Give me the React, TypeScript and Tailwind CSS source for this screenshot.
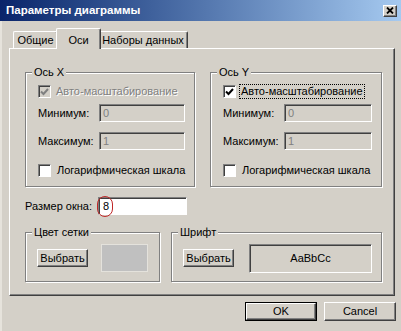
import React from "react";

const raised =
  "border border-t-white border-l-white border-r-[#404040] border-b-[#404040] shadow-[inset_-1px_-1px_0_#808080]";
const sunken =
  "border border-t-[#808080] border-l-[#808080] border-r-white border-b-white shadow-[inset_1px_1px_0_#404040]";

const Check = ({ checked, disabled }: { checked?: boolean; disabled?: boolean }) => (
  <div
    className={`w-[13px] h-[13px] shrink-0 flex items-center justify-center ${sunken} ${
      disabled ? "bg-[#d4d0c8]" : "bg-white"
    }`}
  >
    {checked && (
      <svg width="9" height="8" viewBox="0 0 9 8">
        <path
          d="M1 3.5 L3.5 6 L8 1"
          fill="none"
          stroke={disabled ? "#808080" : "#000"}
          strokeWidth="2"
        />
      </svg>
    )}
  </div>
);

const Field = ({ label, value, width }: { label: string; value: string; width: string }) => (
  <div className="flex items-center h-[18px]">
    <span className="w-[61px]">{label}</span>
    <div className={`${width} h-[18px] bg-[#d4d0c8] ${sunken} pl-[3px] flex items-center text-[#808080]`}>
      {value}
    </div>
  </div>
);

const Group = ({
  title,
  className,
  children,
}: {
  title: string;
  className: string;
  children: React.ReactNode;
}) => (
  <div className={`relative border border-[#808080] shadow-[inset_1px_1px_0_#fff,1px_1px_0_#fff] ${className}`}>
    <span className="absolute -top-[8px] left-[6px] bg-[#d4d0c8] px-[2px] leading-[14px]">{title}</span>
    {children}
  </div>
);

const AxisGroup = ({ title, width, inputW, active }: { title: string; width: string; inputW: string; active?: boolean }) => (
  <Group title={title} className={`${width} h-[115px] pt-[12px] pl-[12px]`}>
    <div className="flex items-center h-[13px] gap-[3px]">
      <Check checked disabled={!active} />
      {active ? (
        <span className="border border-dotted border-black px-[1px] leading-[13px]">Авто-масштабирование</span>
      ) : (
        <span className="pl-[2px] text-[#808080] [text-shadow:1px_1px_0_#fff]">Авто-масштабирование</span>
      )}
    </div>
    <div className="mt-[6px]">
      <Field label="Минимум:" value="0" width={inputW} />
    </div>
    <div className="mt-[10px]">
      <Field label="Максимум:" value="1" width={inputW} />
    </div>
    <div className="mt-[14px] flex items-center h-[13px] gap-[6px]">
      <Check />
      <span>Логарифмическая шкала</span>
    </div>
  </Group>
);

const Btn = ({ children, className = "" }: { children: React.ReactNode; className?: string }) => (
  <div className={`bg-[#d4d0c8] ${raised} flex items-center justify-center ${className}`}>{children}</div>
);

export default function App() {
  return (
    <div className="w-[401px] h-[331px] bg-[#d4d0c8] flex flex-col overflow-hidden text-[11px] text-black font-['Liberation_Sans',Arial,sans-serif]">
      <div className="h-[21px] shrink-0 flex items-center pl-[6px] pr-[4px] bg-linear-to-r from-[#0a246a] to-[#a6caf0]">
        <span className="flex-1 text-white font-bold text-[11.5px]">Параметры диаграммы</span>
        <div className={`w-[14px] h-[12px] bg-[#d4d0c8] ${raised} flex items-center justify-center`}>
          <svg width="8" height="7" viewBox="0 0 8 7">
            <path d="M1 0.5 L7 6.5 M7 0.5 L1 6.5" stroke="#000" strokeWidth="1.8" />
          </svg>
        </div>
      </div>

      <div className="flex-1 flex flex-col border-l-[2px] border-l-[#e6e3dc]">
        <div className="pl-[7px] pt-[7px]">
          <div className="h-[20px] flex items-end pl-[4px]">
            <div className="w-[45px] h-[17px] border-t border-l border-r border-t-white border-l-white border-r-[#404040] shadow-[inset_-1px_0_0_#808080] rounded-t-[2px] flex items-center justify-center">
              Общие
            </div>
            <div className="relative z-10 -mx-[2px] -mb-[1px] w-[45px] h-[21px] bg-[#d4d0c8] border-t border-l border-r border-t-white border-l-white border-r-[#404040] shadow-[inset_-1px_0_0_#808080] rounded-t-[2px] flex items-start pt-[3px] justify-center">
              Оси
            </div>
            <div className="w-[89px] h-[17px] border-t border-r border-t-white border-r-[#404040] shadow-[inset_-1px_0_0_#808080] rounded-t-[2px] flex items-center justify-center">
              Наборы данных
            </div>
          </div>

          <div className={`w-[386px] h-[248px] ${raised} pl-[15px] pt-[23px]`}>
            <div className="flex gap-[15px]">
              <AxisGroup title="Ось X" width="w-[170px]" inputW="w-[86px]" />
              <AxisGroup title="Ось Y" width="w-[172px]" inputW="w-[88px]" active />
            </div>

            <div className="mt-[10px] flex items-center h-[18px]">
              <span className="w-[73px]">Размер окна:</span>
              <div className={`relative w-[89px] h-[18px] bg-white ${sunken} pl-[4px] flex items-center`}>
                8
                <div className="absolute left-[-2px] top-[-2px] w-[16px] h-[21px] rounded-full border border-[#c02828]" />
              </div>
            </div>

            <div className="mt-[17px] flex gap-[11px]">
              <Group title="Цвет сетки" className="w-[135px] h-[50px] pl-[11px] pt-[2px] flex items-center">
                <Btn className="w-[51px] h-[18px]">Выбрать</Btn>
                <div className="ml-[13px] w-[47px] h-[28px] bg-[#c0c0c0] border border-[#e4e2dc]" />
              </Group>
              <Group title="Шрифт" className="w-[211px] h-[50px] pl-[11px] pt-[2px] flex items-center">
                <Btn className="w-[51px] h-[18px]">Выбрать</Btn>
                <div className={`ml-[15px] w-[123px] h-[29px] ${sunken} flex items-center justify-center`}>
                  AaBbCc
                </div>
              </Group>
            </div>
          </div>
        </div>

        <div className="mt-[6px] flex justify-end gap-[7px] pr-[5px]">
          <div className="w-[72px] h-[19px] border border-black">
            <Btn className="w-full h-full">OK</Btn>
          </div>
          <Btn className="w-[72px] h-[19px]">Cancel</Btn>
        </div>
      </div>
    </div>
  );
}
